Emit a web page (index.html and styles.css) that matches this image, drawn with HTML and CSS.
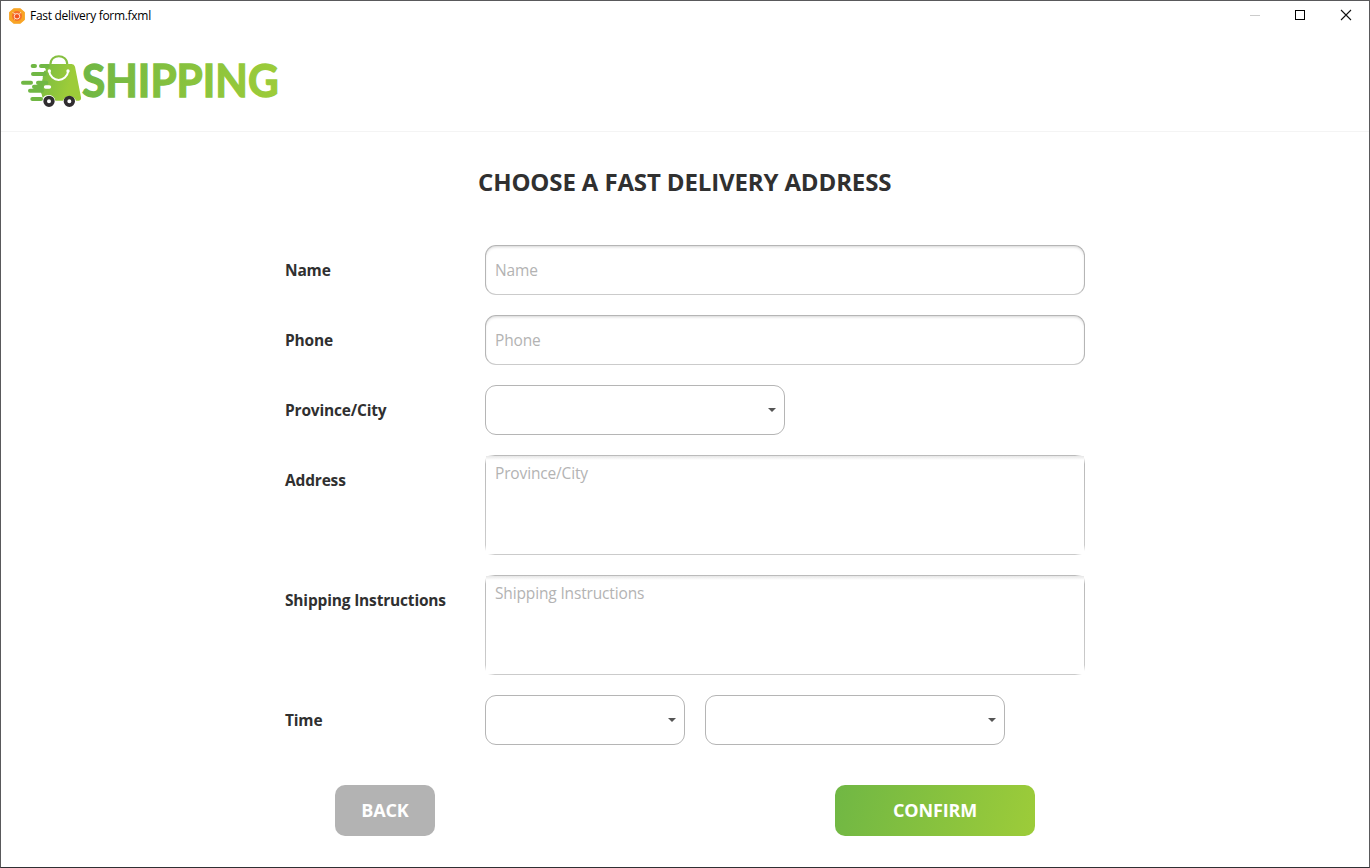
FILE: index.html
```html
<!DOCTYPE html>
<html lang="en">
<head>
<meta charset="utf-8">
<title>Fast delivery form.fxml</title>
<link rel="stylesheet" href="styles.css">
</head>
<body>
<div class="window">
  <header class="titlebar">
    <svg class="app-icon" width="16" height="16" viewBox="0 0 16 16">
      <path d="M5 .8h6L15.300 4.500v7L11 15.200H5L.7 11.500v-7z" fill="#f8a425" stroke="#f8a425" stroke-width="1.200" stroke-linejoin="round"/>
      <circle cx="8" cy="8" r="5" fill="#f4702a"/>
      <path d="M3.500 4.500l3 1.500M12 4l-2 2.500M5 11.500l2-1.500" stroke="#ffd9b8" stroke-width=".9"/>
      <circle cx="8" cy="8.300" r="2.700" fill="#f4511e" stroke="#ffe3cf" stroke-width="1"/>
    </svg>
    <span class="window-title">Fast delivery form.fxml</span>
    <svg class="controls" width="120" height="29" viewBox="0 0 120 29" shape-rendering="crispEdges">
      <path d="M0 14.500h10" stroke="#ccc"/>
      <rect x="45.500" y="9.500" width="9" height="9" fill="none" stroke="#000"/>
      <path d="M91 9l10 10M101 9l-10 10" stroke="#111" stroke-width="1.100" shape-rendering="auto"/>
    </svg>
  </header>
  <div class="brand">
    <svg width="290" height="72" viewBox="0 0 870 216">
      <defs>
        <linearGradient id="bag" gradientUnits="userSpaceOnUse" x1="50" y1="80" x2="195" y2="120">
          <stop offset="0" stop-color="#70b744"/><stop offset=".8" stop-color="#9dcc39"/>
        </linearGradient>
        <linearGradient id="word" gradientUnits="userSpaceOnUse" x1="205" y1="80" x2="795" y2="120">
          <stop offset="0" stop-color="#70b744"/><stop offset="1" stop-color="#9dcc39"/>
        </linearGradient>
      </defs>
      <path d="M109 50C109 16 160 16 160 50" fill="none" stroke="#85bf40" stroke-width="6"/>
      <path d="M98 48H173Q181 48 183 56L201 148Q202 158 195 158H186A21 21 0 0 0 147 158H124A21 21 0 0 0 86 150L80 130L88 75z" fill="url(#bag)"/>
      <g fill="none" stroke-linecap="round" stroke-width="12" stroke="#70b744">
        <path d="M56 54h7M81 54h20M57 78h35M27 104h24M72 104h25M60 116h24M48 128h36M55 153h26"/>
      </g>
      <path d="M62 91H82M53 141H79M70 65H92" stroke="#fff" stroke-width="7" stroke-linecap="round"/>
      <path d="M95 117h11" stroke="#fff" stroke-width="11" stroke-linecap="round"/>
      <path d="M105 68C110 105 158 105 163 68" fill="none" stroke="#fff" stroke-width="6"/>
      <circle cx="106" cy="69" r="5" fill="#fff"/><circle cx="162" cy="69" r="5" fill="#fff"/>
      <g fill="#fff" stroke="#302d30" stroke-width="11">
        <circle cx="105" cy="160" r="11.500"/><circle cx="166" cy="160" r="11.500"/>
      </g>
      <text class="wordmark" x="204" y="146" textLength="590" lengthAdjust="spacingAndGlyphs" fill="url(#word)" stroke="url(#word)">SHIPPING</text>
    </svg>
  </div>
  <main class="content">
    <h1 class="heading"><span>CHOOSE A FAST DELIVERY ADDRESS</span></h1>
    <form class="form">
      <label class="label">Name</label>
      <div class="field input">Name</div>
      <label class="label">Phone</label>
      <div class="field input">Phone</div>
      <label class="label">Province/City</label>
      <div class="selects"><div class="field select wide"></div></div>
      <label class="label">Address</label>
      <div class="area">Province/City</div>
      <label class="label">Shipping Instructions</label>
      <div class="area">Shipping Instructions</div>
      <label class="label">Time</label>
      <div class="selects"><div class="field select"></div><div class="field select wide"></div></div>
    </form>
    <div class="actions">
      <button class="btn back" type="button">BACK</button>
      <button class="btn confirm" type="button">CONFIRM</button>
    </div>
  </main>
</div>
</body>
</html>
```
FILE: styles.css
```css
* { box-sizing: border-box; }
body {
  margin: 0;
  background: #fff;
  color: #303030;
  font-family: "Open Sans", "Noto Sans", sans-serif;
}
.window {
  width: 1370px;
  height: 868px;
  border: 1px solid #59595b;
  border-bottom-color: #303033;
  overflow: hidden;
}
.titlebar {
  display: flex;
  align-items: center;
  height: 29px;
  padding: 0 0 0 8px;
}
.window-title {
  margin-left: 5px;
  font-size: 12px;
  letter-spacing: -0.3px;
  color: #000;
}
.controls { margin-left: auto; margin-right: -1px; }
.brand {
  height: 102px;
  padding: 18px 0 0 13px;
  border-bottom: 1px solid #f4f4f4;
}
.brand svg { display: block; }
.wordmark {
  font: 700 135px Lato, sans-serif;
  stroke-width: 4px;
}
.heading {
  margin: 0;
  padding: 32px 0 0 477px;
  height: 113px;
  font-size: 24px;
  line-height: 36px;
  font-weight: 700;
  white-space: nowrap;
  letter-spacing: -0.13px;
}
.form {
  display: grid;
  grid-template-columns: 200px 600px;
  row-gap: 20px;
  margin-left: 284px;
}
.label {
  font-size: 15.500px;
  line-height: 51px;
  height: 50px;
  font-weight: 700;
  letter-spacing: -0.18px;
  white-space: nowrap;
}
.field {
  height: 50px;
  border: 1px solid #b5b5b5;
  border-radius: 11px;
}
.input {
  padding-left: 9px;
  font-size: 15.500px;
  line-height: 49px;
  letter-spacing: -0.15px;
  color: #b3b3b3;
  border-bottom-color: #cbcbcb;
  box-shadow: inset 0 2px 3px -1px #d4d4d4;
}
.selects { display: flex; gap: 20px; }
.select {
  display: flex;
  align-items: center;
  justify-content: flex-end;
  width: 200px;
  padding-right: 8px;
}
.select::after {
  content: "";
  border: 4px solid transparent;
  border-top-color: #555;
  border-bottom: 0;
}
.select.wide { width: 300px; }
.area {
  height: 100px;
  padding: 5px 10px;
  font-size: 15.500px;
  line-height: 26px;
  letter-spacing: -0.15px;
  color: #b3b3b3;
  background:
    linear-gradient(90deg, transparent 3px, #bbb 10px, #bbb 590px, transparent 597px) top / 100% 1px no-repeat,
    linear-gradient(90deg, transparent 3px, #cbcbcb 10px, #cbcbcb 590px, transparent 597px) bottom / 100% 1px no-repeat,
    linear-gradient(transparent 3px, #bbb 9px, #cbcbcb 90px, transparent 96px) left / 1px 100% no-repeat,
    linear-gradient(transparent 3px, #bbb 9px, #cbcbcb 90px, transparent 96px) right / 1px 100% no-repeat,
    linear-gradient(#e6e6e6, #fff) 1px 1px / 598px 4px no-repeat;
}
.actions {
  display: flex;
  gap: 400px;
  margin: 40px 0 0 334px;
}
.btn {
  height: 51px;
  padding: 0;
  border: 0;
  border-radius: 10px;
  color: #fff;
  font: 700 18px/51px "Open Sans", sans-serif;
  letter-spacing: -0.15px;
}
.back { width: 100px; background: #b3b3b3; }
.confirm { width: 200px; background: linear-gradient(104deg, #70b744, #9dcc39); }
```
